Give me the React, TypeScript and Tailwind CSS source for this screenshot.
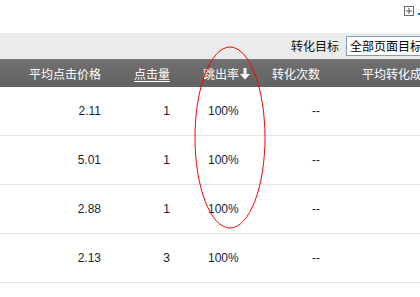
const rows = [
  { price: "2.11", clicks: "1", bounce: "100%", conv: "--" },
  { price: "5.01", clicks: "1", bounce: "100%", conv: "--" },
  { price: "2.88", clicks: "1", bounce: "100%", conv: "--" },
  { price: "2.13", clicks: "3", bounce: "100%", conv: "--" },
];

const cols = "grid grid-cols-[101px_69px_80px_70px_1fr]";

const SortDown = () => (
  <svg width="10" height="12" viewBox="0 0 10 12" className="ml-[1px] inline-block">
    <path d="M3.5 0h3v6h3.5L5 11.5 0 6h3.5z" fill="#fff" />
  </svg>
);

const App = () => {
  return (
    <div className="relative h-[297px] w-[420px] overflow-hidden bg-white font-['Liberation_Sans','Noto_Sans_CJK_SC',sans-serif] text-[12px]">
      {/* top strip */}
      <div className="flex h-[33px] items-start justify-end pt-[6px]">
        <span className="flex h-[10px] w-[10px] items-center justify-center border border-[#6b6b6b]">
          <svg width="8" height="8" viewBox="0 0 8 8">
            <path d="M4 1v6M1 4h6" stroke="#555" strokeWidth="1" />
          </svg>
        </span>
        <span className="ml-[4px] mt-[7px] h-[2px] w-[2px] bg-[#2a6bb8]" />
      </div>

      {/* filter bar */}
      <div className="flex h-[26px] items-center justify-end bg-[#ebebeb] pl-2">
        <span className="mr-[7px] font-['Noto_Sans_CJK_SC',sans-serif] text-[12px] text-[#111]">转化目标</span>
        <div className="mr-[-20px] flex h-[20px] w-[94px] shrink-0 items-center overflow-hidden whitespace-nowrap border border-[#7f9db9] bg-white pl-[3px] font-['Noto_Sans_CJK_SC',sans-serif] text-[12px] text-black">
          全部页面目标
        </div>
      </div>

      {/* header */}
      <div className={`${cols} h-[28px] items-center border-t border-[#777] bg-gradient-to-b from-[#707070] to-[#626262] font-['Noto_Sans_CJK_SC',sans-serif] text-[12px] text-white`}>
        <div className="text-right">平均点击价格</div>
        <div className="text-right">
          <span className="underline underline-offset-2">点击量</span>
        </div>
        <div className="flex items-center pl-[33px]">
          跳出率
          <SortDown />
        </div>
        <div className="text-right">转化次数</div>
        <div className="whitespace-nowrap pl-[42px]">平均转化成本</div>
      </div>

      {/* rows */}
      {rows.map((r, i) => (
        <div
          key={i}
          className={`${cols} h-[49px] items-center border-b border-[#e2e2e2] text-[12px] text-[#1c1c2e]`}
        >
          <div className="text-right">{r.price}</div>
          <div className="text-right">{r.clicks}</div>
          <div className="pl-[38px]">{r.bounce}</div>
          <div className="text-right">{r.conv}</div>
          <div />
        </div>
      ))}

      {/* hand-drawn annotation */}
      <svg className="pointer-events-none absolute left-0 top-0" width="420" height="297">
        <ellipse cx="230" cy="137.5" rx="35" ry="90.5" fill="none" stroke="#ff0000" strokeWidth="1" />
      </svg>
    </div>
  );
};

export default App;
